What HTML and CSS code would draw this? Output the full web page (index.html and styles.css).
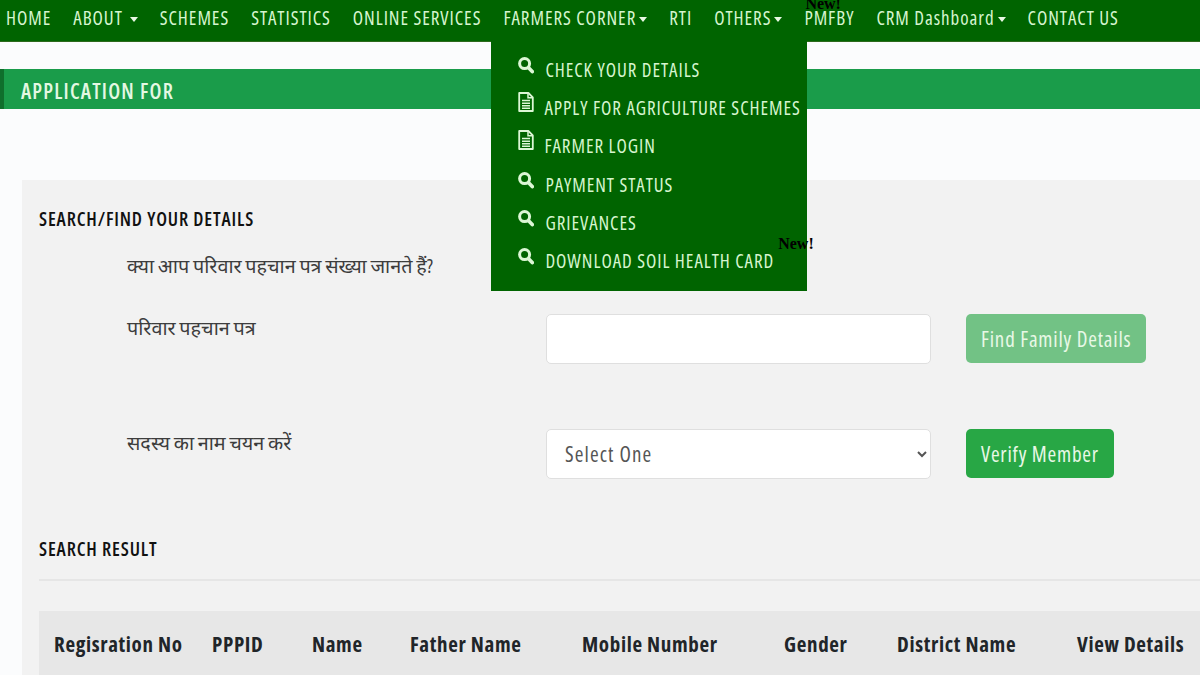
FILE: index.html
```html
<!DOCTYPE html>
<html lang="hi">
<head>
    <meta charset="UTF-8">
    <meta name="viewport" content="width=device-width, initial-scale=1.0">
    <title>Application For</title>
    <link rel="stylesheet" href="styles.css">
</head>
<body>
    <svg class="icon-defs" width="0" height="0" aria-hidden="true">
        <symbol id="icon-search" viewBox="0 0 16 17">
            <circle cx="6.6" cy="6.6" r="5" fill="none" stroke="currentColor" stroke-width="3"/>
            <path d="M10.6 10.8l3.6 3.8" fill="none" stroke="currentColor" stroke-width="3.6" stroke-linecap="round"/>
        </symbol>
        <symbol id="icon-file" viewBox="0 0 16 20">
            <path d="M1.2 1h9.2l4.4 4.4V19H1.2z" fill="none" stroke="currentColor" stroke-width="1.8" stroke-linejoin="round"/>
            <path d="M10 1.4v4.4h4.4M4 8.6h8M4 11.2h8M4 13.8h8M4 16.2h8" fill="none" stroke="currentColor" stroke-width="1.5"/>
        </symbol>
    </svg>

    <nav class="top-nav">
        <a class="nav-link" href="#">HOME</a>
        <a class="nav-link caret caret-wide" href="#">ABOUT</a>
        <a class="nav-link" href="#">SCHEMES</a>
        <a class="nav-link" href="#">STATISTICS</a>
        <a class="nav-link" href="#">ONLINE SERVICES</a>
        <div class="nav-item">
            <a class="nav-link caret" href="#">FARMERS CORNER</a>
            <div class="dropdown">
                <a class="drop-link" href="#"><svg class="drop-icon"><use href="#icon-search"/></svg>CHECK YOUR DETAILS</a>
                <a class="drop-link" href="#"><svg class="drop-icon file"><use href="#icon-file"/></svg>APPLY FOR AGRICULTURE SCHEMES</a>
                <a class="drop-link" href="#"><svg class="drop-icon file"><use href="#icon-file"/></svg>FARMER LOGIN</a>
                <a class="drop-link" href="#"><svg class="drop-icon"><use href="#icon-search"/></svg>PAYMENT STATUS</a>
                <a class="drop-link" href="#"><svg class="drop-icon"><use href="#icon-search"/></svg>GRIEVANCES</a>
                <a class="drop-link" href="#"><svg class="drop-icon"><use href="#icon-search"/></svg>DOWNLOAD SOIL HEALTH CARD<span class="new-tag drop-new">New!</span></a>
            </div>
        </div>
        <a class="nav-link" href="#">RTI</a>
        <a class="nav-link caret" href="#">OTHERS</a>
        <a class="nav-link pmfby" href="#">PMFBY<span class="new-tag nav-new">New!</span></a>
        <a class="nav-link caret" href="#">CRM Dashboard</a>
        <a class="nav-link" href="#">CONTACT US</a>
    </nav>

    <div class="page-title">APPLICATION FOR</div>

    <main class="panel">
        <h4 class="section-title">SEARCH/FIND YOUR DETAILS</h4>
        <p class="question">क्या आप परिवार पहचान पत्र संख्या जानते हैं?</p>

        <div class="form-row">
            <label class="form-label" for="familyId">परिवार पहचान पत्र</label>
            <input class="form-field" type="text" id="familyId">
            <button class="btn btn-faded">Find Family Details</button>
        </div>

        <div class="form-row second">
            <label class="form-label" for="member">सदस्य का नाम चयन करें</label>
            <select class="form-field" id="member">
                <option>Select One</option>
            </select>
            <button class="btn">Verify Member</button>
        </div>

        <h4 class="section-title result-title">SEARCH RESULT</h4>
        <hr class="divider">

        <table class="result-table">
            <thead>
                <tr>
                    <th class="col-reg">Regisration No</th>
                    <th class="col-ppp">PPPID</th>
                    <th class="col-name">Name</th>
                    <th class="col-father">Father Name</th>
                    <th class="col-mobile">Mobile Number</th>
                    <th class="col-gender">Gender</th>
                    <th class="col-district">District Name</th>
                    <th>View Details</th>
                </tr>
            </thead>
        </table>
    </main>
</body>
</html>
```

FILE: styles.css
```css
* {
    margin: 0;
    padding: 0;
    box-sizing: border-box;
}

body {
    background: #fbfcfd;
    font-family: "Open Sans", "Noto Sans", "Noto Sans Devanagari", "Lohit Devanagari", sans-serif;
    font-stretch: 85%;
    height: 675px;
    overflow: hidden;
}

a {
    color: inherit;
    text-decoration: none;
}

.icon-defs {
    position: absolute;
}

.top-nav {
    display: flex;
    gap: 22px;
    height: 42px;
    padding: 0 0 0 6px;
    background: #006400;
    border-bottom: 1px solid #2c6a1c;
    color: #d6f5cf;
    font-size: 19px;
    letter-spacing: 0.95px;
    line-height: 36px;
    white-space: nowrap;
}

.nav-item {
    position: relative;
}

.nav-link {
    display: block;
    position: relative;
}

.caret::after {
    content: "";
    display: inline-block;
    margin-left: 3px;
    vertical-align: 3px;
    border-top: 5px solid #e8f8e4;
    border-left: 4.5px solid transparent;
    border-right: 4.5px solid transparent;
}

.caret-wide::after {
    margin-left: 7px;
}

.new-tag {
    position: absolute;
    color: #000;
    font-family: "Liberation Serif", serif;
    font-size: 16px;
    font-weight: bold;
    font-stretch: normal;
    letter-spacing: 0;
    line-height: 16px;
}

.nav-new {
    top: -4px;
    left: 1px;
}

.drop-new {
    top: -6px;
    left: calc(100% + 4px);
}

.dropdown {
    position: absolute;
    top: 41px;
    left: -12px;
    width: 316px;
    height: 250px;
    padding: 9.5px 0 0 27px;
    background: #006400;
    z-index: 2;
}

.drop-link {
    display: flex;
    position: relative;
    width: max-content;
    height: 38.4px;
    line-height: 39px;
}

.drop-icon {
    width: 16px;
    height: 17px;
    margin: 6px 11px 0 0;
    color: #dcf7d5;
    flex-shrink: 0;
}

.drop-icon.file {
    height: 20px;
    margin-top: 3px;
    margin-right: 10px;
}

.page-title {
    margin-top: 27px;
    height: 40px;
    padding-left: 17px;
    background: #1a9c4a;
    border-left: 4px solid #0f6f2c;
    color: #e4f8e2;
    font-size: 21px;
    font-weight: 600;
    letter-spacing: 1.2px;
    line-height: 44px;
}

.panel {
    margin: 71px 0 0 22px;
    height: 500px;
    padding: 27px 0 0 17px;
    background: #f2f2f2;
}

.section-title {
    color: #111;
    font-size: 19px;
    font-weight: 600;
    letter-spacing: 0.85px;
    line-height: 24px;
}

.question,
.form-label {
    color: #3d3d3d;
    font-size: 19.8px;
    line-height: 30px;
}

.question {
    margin: 20px 0 0 88px;
}

.form-row {
    display: flex;
    align-items: flex-start;
    margin-top: 32px;
}

.form-row.second {
    margin-top: 64px;
}

.form-label {
    width: 419px;
    margin-left: 88px;
}

.form-field {
    width: 385px;
    height: 50px;
    margin-top: 1px;
    padding: 0 12px 0 14px;
    background: #fff;
    border: 1px solid #dfdfdf;
    border-radius: 5px;
    color: #555;
    font-family: inherit;
    font-stretch: 85%;
    font-size: 21px;
    letter-spacing: 1.1px;
}

.btn {
    height: 49px;
    margin: 1px 0 0 35px;
    padding: 0 15px;
    background: #28a745;
    border: none;
    border-radius: 5px;
    color: #e8f8e6;
    font-family: inherit;
    font-stretch: 85%;
    font-size: 21px;
    letter-spacing: 0.8px;
}

.btn-faded {
    background: #72c285;
}

.result-title {
    margin-top: 58px;
}

.divider {
    margin-top: 18px;
    border: none;
    border-top: 2px solid #e6e6e6;
}

.result-table {
    margin-top: 30px;
    width: 1161px;
    table-layout: fixed;
    border-collapse: collapse;
    background: #e7e7e7;
}

.result-table th {
    height: 66px;
    padding-left: 15px;
    color: #212529;
    font-size: 21px;
    font-weight: 700;
    letter-spacing: 0.65px;
    text-align: left;
    white-space: nowrap;
}

.col-reg { width: 158px; }
.col-ppp { width: 100px; }
.col-name { width: 98px; }
.col-father { width: 172px; }
.col-mobile { width: 202px; }
.col-gender { width: 113px; }
.col-district { width: 180px; }
```
